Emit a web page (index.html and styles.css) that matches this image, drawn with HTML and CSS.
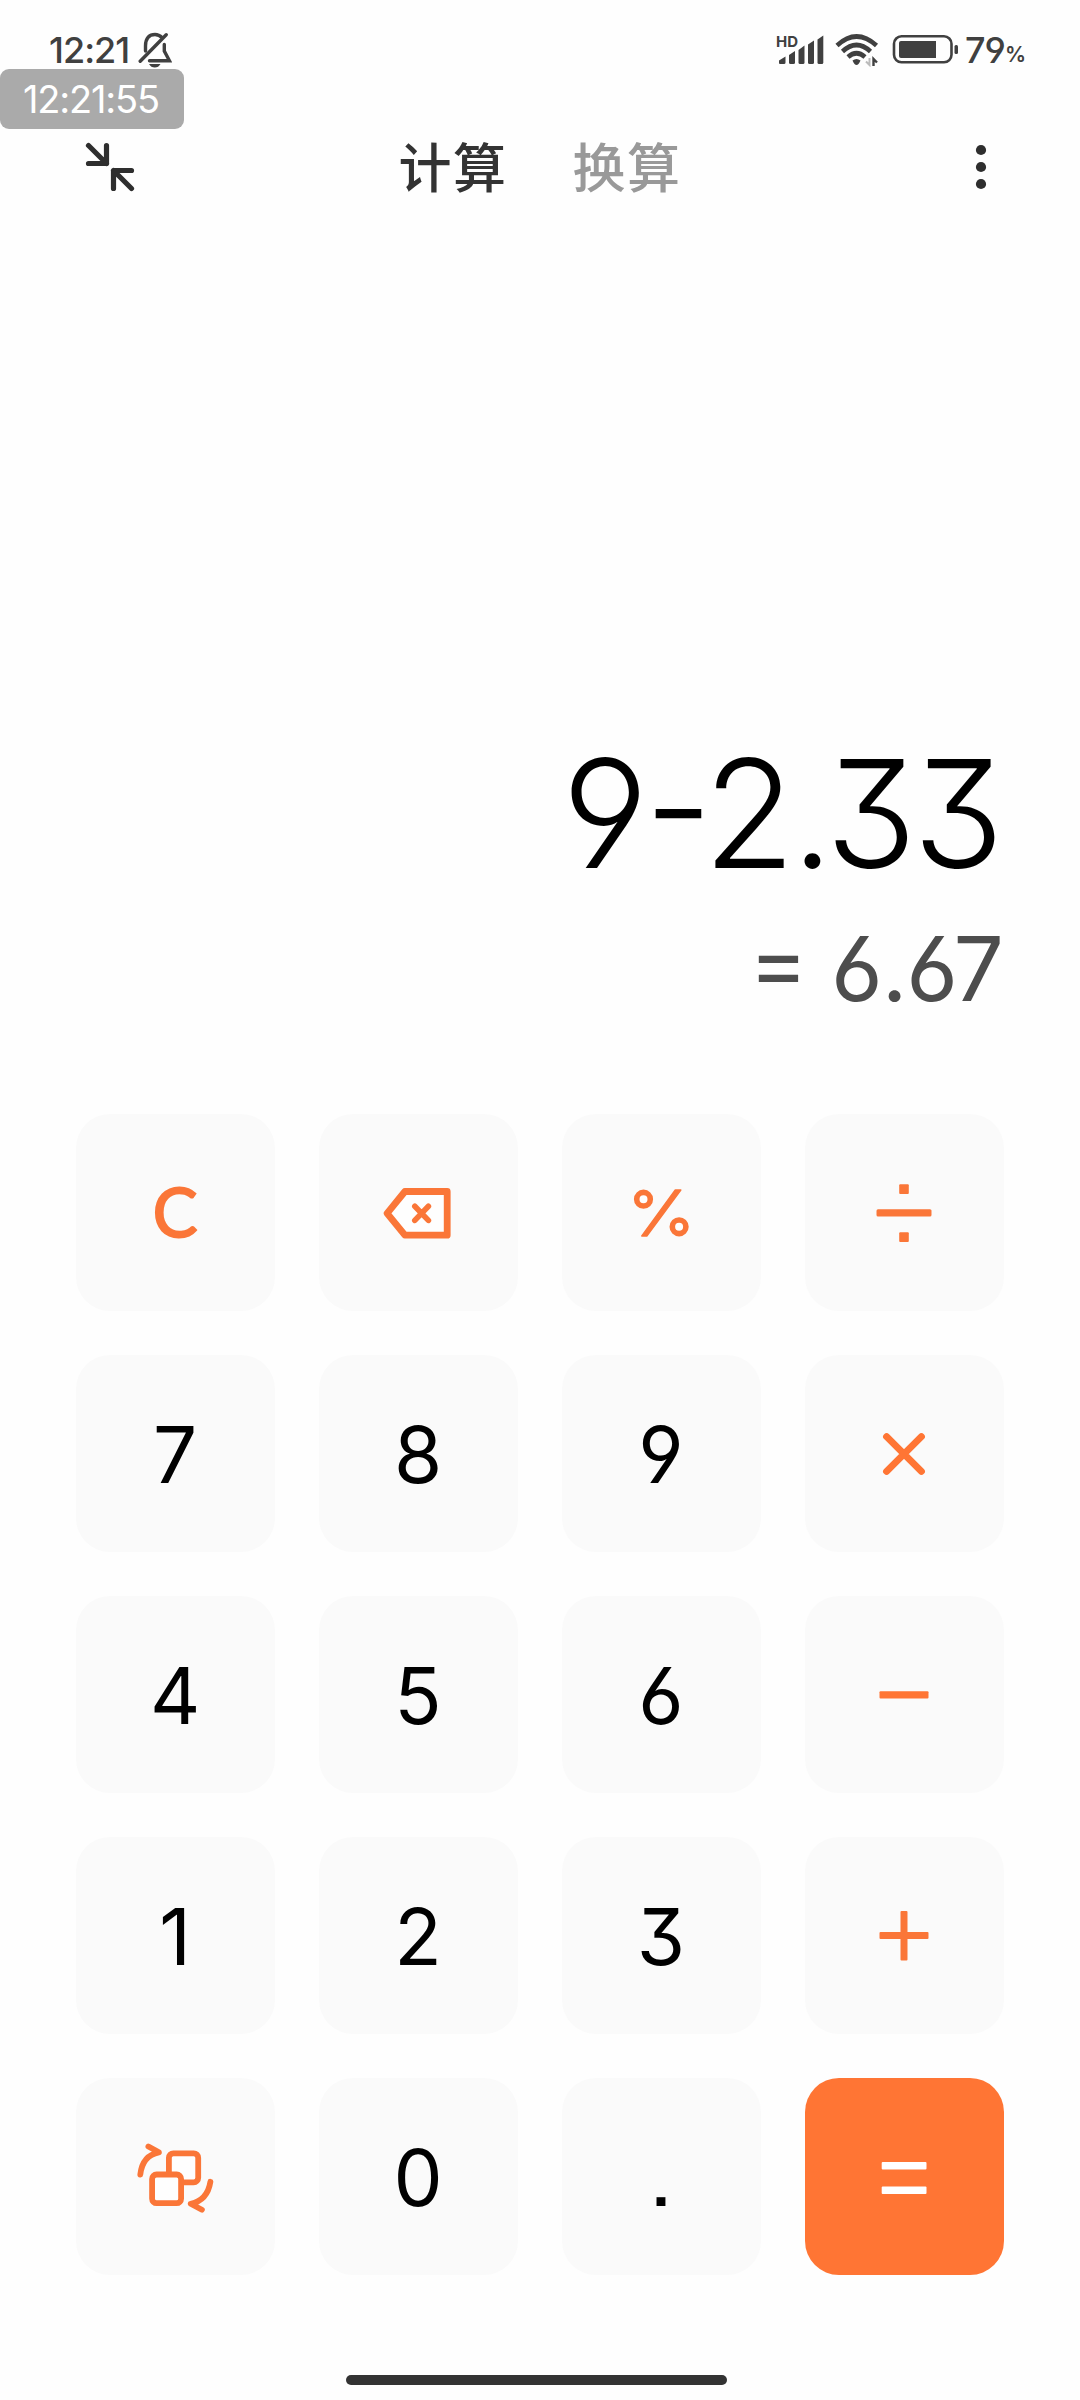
FILE: index.html
```html
<!DOCTYPE html>
<html lang="zh-CN">
<head>
    <meta charset="UTF-8">
    <meta name="viewport" content="width=device-width, initial-scale=1.0">
    <title>计算器</title>
    <link rel="stylesheet" href="styles.css">
</head>
<body>
    <div class="screen">
        <div class="status-bar">
            <div class="status-left">
                <span class="clock">12:21</span>
                <svg class="bell" width="34" height="36" viewBox="138 32 34 36" fill="none" stroke="#404040" stroke-width="3.4" stroke-linecap="round">
                    <path d="M145.500 51V46C145.500 38 149.500 34.500 155 34.500C158 34.500 160 35.500 162 37.500"/>
                    <path d="M164.300 44.500V51L169.500 60.800H149.500"/>
                    <path d="M140.200 61.200L166.200 34.800"/>
                    <path d="M149 64H160.500Q158.500 67.500 154.800 67.500Q151 67.500 149 64Z" fill="#404040" stroke="none"/>
                </svg>
            </div>
            <div class="status-right">
                <div class="signal">
                    <span class="hd">HD</span>
                    <svg width="46" height="30" viewBox="778 35 46 30" fill="#404040">
                        <path d="M779 63V60.500L785.500 56.500V62.500Q785.500 64 784 64H780Q779 64 779 63Z"/>
                        <path d="M789 55L795 51V62.500Q795 64 793.500 64H790.500Q789 64 789 62.500Z"/>
                        <path d="M798.500 50L804.500 45.500V62.500Q804.500 64 803 64H800Q798.500 64 798.500 62.500Z"/>
                        <path d="M808 44.500L814 40.500V62.500Q814 64 812.500 64H809.500Q808 64 808 62.500Z"/>
                        <path d="M817.500 39.500L823.300 35.500V62.500Q823.300 64 821.800 64H819Q817.500 64 817.500 62.500Z"/>
                    </svg>
                </div>
                <svg class="wifi" width="44" height="34" viewBox="835 33 44 34" fill="none" stroke="#404040" stroke-width="4.6">
                    <path d="M837 45.500Q856.500 27.500 876.500 45.500"/>
                    <path d="M842.500 51.500Q856.500 38.500 870.500 51.500"/>
                    <path d="M848 57Q856.500 49.500 865 57"/>
                    <path d="M852.500 60.500Q856.500 57.500 860.500 60.500Q858.500 65 856.500 65Q854.500 65 852.500 60.500Z" fill="#404040" stroke="none"/>
                    <path d="M869.500 58V65L866 61.500" stroke="#bbb" stroke-width="2"/>
                    <path d="M873.500 66V59L877 62.500" stroke-width="2.4"/>
                </svg>
                <svg class="battery" width="66" height="30" viewBox="892 34 66 30">
                    <rect x="894" y="36.300" width="57.500" height="26" rx="7.500" fill="none" stroke="#404040" stroke-width="2.600"/>
                    <path d="M901 41H936V58H901Q899 58 899 56V43Q899 41 901 41Z" fill="#404040"/>
                    <rect x="954.500" y="45" width="3.500" height="9" rx="1.500" fill="#404040"/>
                </svg>
                <span class="level">79</span><span class="percent">%</span>
            </div>
        </div>
        <div class="timer">12:21:55</div>

        <div class="header">
            <svg width="50" height="50" viewBox="85 142 50 50" fill="none" stroke="#2e2e2e" stroke-width="5.200" stroke-linecap="round" stroke-linejoin="round">
                <path d="M88.500 145.500L106.500 163.500M106.500 145.500V163.500H88.500"/>
                <path d="M131.500 188.500L113.500 170.500M131.500 170.500H113.500V188.500"/>
            </svg>
            <div class="tabs">
                <span class="tab active">计算</span>
                <span class="tab">换算</span>
            </div>
            <svg width="12" height="46" viewBox="0 0 12 46" fill="#2e2e2e">
                <circle cx="6" cy="6" r="5.100"/>
                <circle cx="6" cy="23" r="5.100"/>
                <circle cx="6" cy="40" r="5.100"/>
            </svg>
        </div>

        <div class="display">
            <div class="expression">9-2.33</div>
            <div class="result">= 6.67</div>
        </div>

        <div class="keypad">
            <button class="key clear">C</button>
            <button class="key">
                <svg width="70" height="56" viewBox="382.600 1184 70 56" fill="#fefefe" stroke="#fa7638" stroke-linecap="round" stroke-linejoin="round">
                    <path d="M386.700 1212.300L404.500 1190.500H446.800V1234.200H404.500Z" stroke-width="6.800"/>
                    <path d="M414.400 1205.200L428 1219.400M428 1205.200L414.400 1219.400" stroke-width="5.600"/>
                </svg>
            </button>
            <button class="key">
                <svg width="60" height="56" viewBox="631.200 1184.500 60 56" fill="#fefefe" stroke="#fa7638">
                    <circle cx="643.700" cy="1198.700" r="6.800" stroke-width="5.600"/>
                    <circle cx="679.300" cy="1226.300" r="6.800" stroke-width="5.600"/>
                    <path d="M642 1235.500L675.500 1189.500H681L647 1235.500Z" fill="#fa7638" stroke-width="1.500" stroke-linejoin="round"/>
                </svg>
            </button>
            <button class="key">
                <svg width="60" height="60" viewBox="-30 -30 60 60" fill="#fa7638">
                    <rect x="-27.500" y="-3.700" width="55" height="7.200" rx="1.500"/>
                    <rect x="-4.800" y="-28.700" width="9.600" height="9.600" rx="1"/>
                    <rect x="-4.800" y="19.300" width="9.600" height="9.600" rx="1"/>
                </svg>
            </button>

            <button class="key">7</button>
            <button class="key">8</button>
            <button class="key">9</button>
            <button class="key">
                <svg width="60" height="60" viewBox="-30 -30 60 60" stroke="#ff7534" stroke-width="7" stroke-linecap="round">
                    <path d="M-17.400 -17.400L17.400 17.400M17.400 -17.400L-17.400 17.400"/>
                </svg>
            </button>

            <button class="key">4</button>
            <button class="key">5</button>
            <button class="key">6</button>
            <button class="key">
                <svg width="60" height="60" viewBox="-30 -30 60 60" fill="#ff7534">
                    <rect x="-24.500" y="-3.700" width="49" height="7.200" rx="1"/>
                </svg>
            </button>

            <button class="key">1</button>
            <button class="key">2</button>
            <button class="key">3</button>
            <button class="key">
                <svg width="60" height="60" viewBox="-30 -30 60 60" fill="#fa7638">
                    <rect x="-24.500" y="-3.900" width="49" height="7" rx="1"/>
                    <rect x="-3.500" y="-25" width="7" height="49.500" rx="1"/>
                </svg>
            </button>

            <button class="key">
                <svg width="80" height="72" viewBox="135.100 2140.500 80 72" fill="none" stroke="#fa7638" stroke-width="5.800" stroke-linecap="round" stroke-linejoin="round">
                    <rect x="169" y="2152.800" width="29.300" height="29" rx="4.500" fill="#fefefe"/>
                    <rect x="152.200" y="2174" width="29" height="28.700" rx="4.500" fill="#fefefe"/>
                    <path d="M140.400 2174Q142.500 2155 159 2151.800L148.500 2146"/>
                    <path d="M210.500 2181.300Q207.500 2200 190.800 2203.300L202 2209.200"/>
                </svg>
            </button>
            <button class="key">0</button>
            <button class="key dot">.</button>
            <button class="key equals">
                <svg width="60" height="60" viewBox="-30 -30 60 60" fill="#fff">
                    <rect x="-22.300" y="-15" width="44.800" height="7.400" rx="1"/>
                    <rect x="-22.300" y="9.600" width="44.800" height="7.400" rx="1"/>
                </svg>
            </button>
        </div>

        <div class="home-bar"></div>
    </div>
</body>
</html>
```
FILE: styles.css
```css
* {
    box-sizing: border-box;
}
body {
    margin: 0;
    background-color: #fefefe;
    font-family: Inter, "Noto Sans CJK SC", sans-serif;
    /* open 6 and 9, flat-top 3 */
    font-feature-settings: "cv03", "cv04", "cv09";
}
svg {
    display: block;
    flex: none;
}
.screen {
    position: relative;
    display: flex;
    flex-direction: column;
    width: 1080px;
    height: 2400px;
    overflow: hidden;
}
.status-bar {
    display: flex;
    justify-content: space-between;
    height: 100px;
    padding: 32px 54px 0 49px;
    color: #404040;
}
.status-left,
.status-right {
    display: flex;
    align-items: flex-start;
}
.clock,
.level {
    font-size: 36px;
    font-weight: 500;
    line-height: 36px;
}
.clock {
    width: 89px;
    letter-spacing: -1px;
}
.level {
    letter-spacing: -1px;
}
.signal {
    position: relative;
    padding: 3px 11px 0 0;
}
.hd {
    position: absolute;
    top: 2px;
    left: -2px;
    font-size: 15px;
    font-weight: 700;
    line-height: 15px;
}
.wifi {
    margin: 1px 13px 0 0;
}
.battery {
    margin: 2px 7px 0 0;
}
.percent {
    padding-top: 12px;
    font-size: 21px;
    font-weight: 600;
    line-height: 21px;
}
/* floating clock over the page */
.timer {
    position: absolute;
    top: 69px;
    left: 0;
    width: 184px;
    height: 60px;
    padding-right: 2px;
    border-radius: 9px;
    background-color: #aaa;
    color: #fff;
    font-size: 38px;
    line-height: 61px;
    text-align: center;
    letter-spacing: -1.2px;
}
.header {
    display: flex;
    align-items: center;
    justify-content: space-between;
    height: 134px;
    padding: 0 93px 0 85px;
}
.tabs {
    display: flex;
    gap: 65px;
    margin-right: 30px;
    padding-bottom: 4px;
    font-family: "Noto Sans CJK SC", sans-serif;
    font-size: 53px;
    font-weight: 500;
    line-height: 60px;
    letter-spacing: 1.5px;
}
.tab {
    color: #999;
}
.tab.active {
    color: #333;
}
.display {
    height: 880px;
    padding: 490px 76px 0 0;
    text-align: right;
    /* "case" lifts the minus to digit height */
    font-feature-settings: "cv03", "cv04", "cv09", "case";
}
.expression {
    padding-right: 4px;
    color: #000;
    font-size: 150px;
    font-weight: 360;
    line-height: 180px;
    letter-spacing: -4px;
}
.result {
    padding-right: 1px;
    padding-top: 5px;
    color: #4d4d4d;
    font-size: 89px;
    font-weight: 380;
    line-height: 120px;
    letter-spacing: -1px;
}
.keypad {
    display: grid;
    grid-template-columns: repeat(4, 1fr);
    grid-auto-rows: 197px;
    gap: 44px 43.600px;
    padding: 0 76px;
}
.key {
    display: flex;
    align-items: center;
    justify-content: center;
    padding: 1px 1px 0 0;
    border: none;
    border-radius: 34px;
    background-color: #fafafa;
    color: #000;
    font-family: inherit;
    font-feature-settings: inherit;
    font-size: 78px;
    font-weight: 400;
}
.key.clear {
    padding-bottom: 4px;
    color: #fa7638;
    font-family: Lato, sans-serif;
    font-size: 67px;
    font-weight: 400;
    -webkit-text-stroke: 2px #fa7638;
}
.key.dot {
    font-feature-settings: "ss07";
}
.key.equals {
    background-color: #ff7534;
}
.home-bar {
    width: 381px;
    height: 10px;
    margin: auto 0 15px 346px;
    border-radius: 5px;
    background-color: #333;
}
```
